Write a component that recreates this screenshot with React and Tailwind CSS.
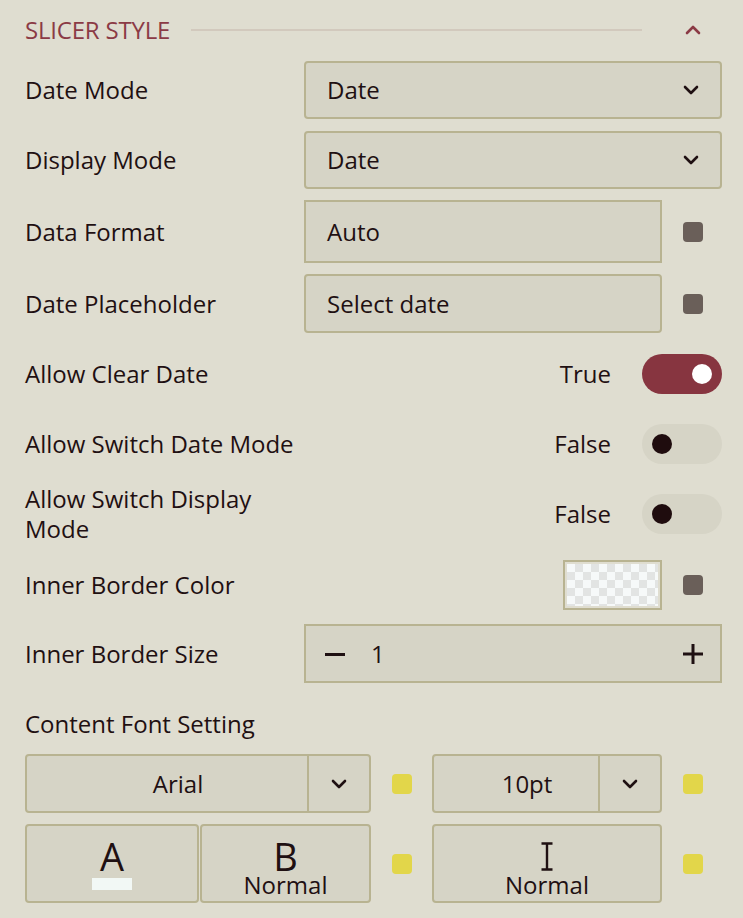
import React from "react";
import { ChevronDown, ChevronUp } from "lucide-react";

const font = { fontFamily: '"Open Sans", "Noto Sans", sans-serif' };

function Sq({ yellow }) {
  return (
    <div
      className={
        "w-[20px] h-[20px] rounded-[4px] shrink-0 " +
        (yellow ? "bg-[#e2d64a]" : "bg-[#6a5f59]")
      }
    />
  );
}

function Select({ value }) {
  return (
    <div className="flex-1 h-full flex items-center justify-between pl-[21px] pr-[17px] bg-[#d6d4c6] border-2 border-[#b8b391] rounded-[4px]">
      <span>{value}</span>
      <ChevronDown size={24} strokeWidth={2.6} className="text-[#1f1012]" />
    </div>
  );
}

function Toggle({ on }) {
  return (
    <div
      className={
        "w-[80px] h-[40px] rounded-full flex items-center px-[10px] " +
        (on ? "bg-[#873540] justify-end" : "bg-[#d6d4c6] justify-start")
      }
    >
      <div
        className={
          "w-[20px] h-[20px] rounded-full " + (on ? "bg-white" : "bg-[#1f0c0e]")
        }
      />
    </div>
  );
}

export default function App() {
  return (
    <div
      className="w-[743px] h-[918px] bg-[#dfddd0] text-[#1f1012] text-[24px] pl-[25px] pr-[21px] overflow-hidden"
      style={font}
    >
      {/* header */}
      <div className="h-[60px] flex items-center">
        <span className="text-[#8b3a45] tracking-[-0.2px]">SLICER STYLE</span>
        <div className="ml-[21px] flex-1 h-[2px] bg-[#d2c9bd]" />
        <ChevronUp size={24} strokeWidth={2.6} className="text-[#8b3a45] ml-[39px] mr-[17px]" />
      </div>

      {/* Date Mode */}
      <div className="mt-[1px] h-[58px] flex items-center">
        <div className="w-[279px]">Date Mode</div>
        <Select value="Date" />
      </div>

      {/* Display Mode */}
      <div className="mt-[12px] h-[58px] flex items-center">
        <div className="w-[279px]">Display Mode</div>
        <Select value="Date" />
      </div>

      {/* Data Format */}
      <div className="mt-[11px] h-[63px] flex items-center">
        <div className="w-[279px]">Data Format</div>
        <div className="w-[358px] h-full flex items-center pl-[21px] bg-[#d6d4c6] border-2 border-[#b8b391]">
          Auto
        </div>
        <div className="ml-[21px]">
          <Sq />
        </div>
      </div>

      {/* Date Placeholder */}
      <div className="mt-[11px] h-[59px] flex items-center">
        <div className="w-[279px]">Date Placeholder</div>
        <div className="w-[358px] h-full flex items-center pl-[21px] bg-[#d6d4c6] border-2 border-[#b8b391] rounded-[4px]">
          Select date
        </div>
        <div className="ml-[21px]">
          <Sq />
        </div>
      </div>

      {/* Allow Clear Date */}
      <div className="mt-[21px] h-[40px] flex items-center justify-between">
        <div>Allow Clear Date</div>
        <div className="flex items-center gap-[31px]">
          <span>True</span>
          <Toggle on />
        </div>
      </div>

      {/* Allow Switch Date Mode */}
      <div className="mt-[30px] h-[40px] flex items-center justify-between">
        <div>Allow Switch Date Mode</div>
        <div className="flex items-center gap-[31px]">
          <span>False</span>
          <Toggle />
        </div>
      </div>

      {/* Allow Switch Display Mode */}
      <div className="mt-[30px] h-[40px] flex items-center justify-between">
        <div className="w-[270px] leading-[30px]">
          Allow Switch Display
          <br />
          Mode
        </div>
        <div className="flex items-center gap-[31px]">
          <span>False</span>
          <Toggle />
        </div>
      </div>

      {/* Inner Border Color */}
      <div className="mt-[26px] h-[50px] flex items-center justify-between">
        <div>Inner Border Color</div>
        <div className="flex items-center gap-[21px] pr-[19px]">
          <div className="w-[99px] h-[50px] border-2 border-[#b8b391] p-[2px] bg-[#dfddd0]">
            <div className="w-full h-full bg-[repeating-conic-gradient(#e2e4e3_0%_25%,#f6f9f9_0%_50%)] bg-[length:16px_16px]" />
          </div>
          <Sq />
        </div>
      </div>

      {/* Inner Border Size */}
      <div className="mt-[14px] h-[59px] flex items-center">
        <div className="w-[279px]">Inner Border Size</div>
        <div className="flex-1 h-full flex items-center bg-[#d6d4c6] border-2 border-[#b8b391] pl-[19px] pr-[17px]">
          <svg width="20" height="20" viewBox="0 0 20 20">
            <path d="M0 10.5H20" stroke="#1f1012" strokeWidth="3" fill="none" />
          </svg>
          <span className="ml-[26px]">1</span>
          <svg width="20" height="20" viewBox="0 0 20 20" className="ml-auto">
            <path d="M0 10H20M10 0V20" stroke="#1f1012" strokeWidth="3" fill="none" />
          </svg>
        </div>
      </div>

      {/* Content Font Setting */}
      <div className="mt-[26px] h-[30px] flex items-center">Content Font Setting</div>

      {/* Font row */}
      <div className="mt-[15px] h-[59px] flex items-center">
        <div className="w-[346px] h-full flex bg-[#d6d4c6] border-2 border-[#b8b391] rounded-[4px]">
          <div className="flex-1 flex items-center justify-center pl-[22px]">Arial</div>
          <div className="w-[62px] border-l-2 border-[#b8b391] flex items-center justify-center">
            <ChevronDown size={24} strokeWidth={2.6} />
          </div>
        </div>
        <div className="ml-[21px]">
          <Sq yellow />
        </div>
        <div className="ml-[20px] w-[230px] h-full flex bg-[#d6d4c6] border-2 border-[#b8b391] rounded-[4px]">
          <div className="flex-1 flex items-center justify-center pl-[22px]">10pt</div>
          <div className="w-[62px] border-l-2 border-[#b8b391] flex items-center justify-center">
            <ChevronDown size={24} strokeWidth={2.6} />
          </div>
        </div>
        <div className="ml-[21px]">
          <Sq yellow />
        </div>
      </div>

      {/* Style row */}
      <div className="mt-[11px] h-[79px] flex items-center">
        <div className="w-[174px] h-full bg-[#d6d4c6] border-2 border-[#b8b391] rounded-[4px] flex flex-col items-center pt-[13px]">
          <span className="text-[38px] leading-[34px]">A</span>
          <div className="mt-[5px] w-[40px] h-[12px] bg-[#f2f8f5]" />
        </div>
        <div className="ml-[1px] w-[171px] h-full bg-[#d6d4c6] border-2 border-[#b8b391] rounded-[4px] flex flex-col items-center pt-[13px]">
          <span className="text-[38px] leading-[34px]">B</span>
          <span className="leading-[22px] mt-[1px]">Normal</span>
        </div>
        <div className="ml-[21px]">
          <Sq yellow />
        </div>
        <div className="ml-[20px] w-[230px] h-full bg-[#d6d4c6] border-2 border-[#b8b391] rounded-[4px] flex flex-col items-center pt-[16px]">
          <svg width="14" height="29" viewBox="0 0 14 29">
            <path d="M1.5 1.5H12.5M7 1.5V27.5M1.5 27.5H12.5" stroke="#1f1012" strokeWidth="2.4" fill="none" />
          </svg>
          <span className="leading-[22px] mt-[3px]">Normal</span>
        </div>
        <div className="ml-[21px]">
          <Sq yellow />
        </div>
      </div>
    </div>
  );
}
